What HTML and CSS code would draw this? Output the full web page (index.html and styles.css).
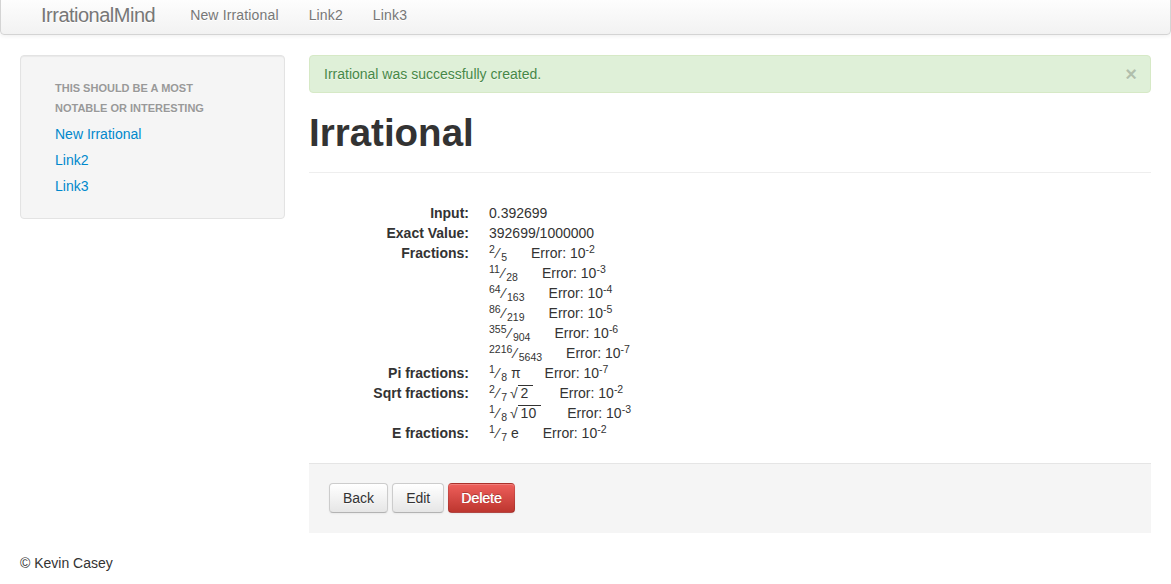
FILE: index.html
```html
<!DOCTYPE html>
<html>
<head>
<meta charset="utf-8">
<title>IrrationalMind</title>
<link rel="stylesheet" href="styles.css">
</head>
<body>
<div class="navbar">
  <a class="brand" href="#">IrrationalMind</a>
  <ul class="nav">
    <li><a href="#">New Irrational</a></li>
    <li><a href="#">Link2</a></li>
    <li><a href="#">Link3</a></li>
  </ul>
</div>

<div class="container">
  <div class="row">
    <aside class="well">
      <ul class="nav-list">
        <li class="nav-header">This should be a most<br>notable or interesting</li>
        <li><a href="#">New Irrational</a></li>
        <li><a href="#">Link2</a></li>
        <li><a href="#">Link3</a></li>
      </ul>
    </aside>

    <main class="content">
      <div class="alert">
        <span>Irrational was successfully created.</span>
        <span class="close">×</span>
      </div>

      <div class="page-header">
        <h1>Irrational</h1>
      </div>

      <dl class="dl">
        <dt>Input:</dt>
        <dd>0.392699</dd>
        <dt>Exact Value:</dt>
        <dd>392699/1000000</dd>
        <dt>Fractions:</dt>
        <dd>
          <div class="frac-row"><span class="frac"><sup>2</sup><span class="sl">⁄</span><sub>5</sub></span><span class="err">Error: 10<sup>-2</sup></span></div>
          <div class="frac-row"><span class="frac"><sup>11</sup><span class="sl">⁄</span><sub>28</sub></span><span class="err">Error: 10<sup>-3</sup></span></div>
          <div class="frac-row"><span class="frac"><sup>64</sup><span class="sl">⁄</span><sub>163</sub></span><span class="err">Error: 10<sup>-4</sup></span></div>
          <div class="frac-row"><span class="frac"><sup>86</sup><span class="sl">⁄</span><sub>219</sub></span><span class="err">Error: 10<sup>-5</sup></span></div>
          <div class="frac-row"><span class="frac"><sup>355</sup><span class="sl">⁄</span><sub>904</sub></span><span class="err">Error: 10<sup>-6</sup></span></div>
          <div class="frac-row"><span class="frac"><sup>2216</sup><span class="sl">⁄</span><sub>5643</sub></span><span class="err">Error: 10<sup>-7</sup></span></div>
        </dd>
        <dt>Pi fractions:</dt>
        <dd><span class="frac"><sup>1</sup><span class="sl">⁄</span><sub>8</sub></span> π<span class="err">Error: 10<sup>-7</sup></span></dd>
        <dt>Sqrt fractions:</dt>
        <dd>
          <div class="frac-row"><span class="frac"><sup>2</sup><span class="sl">⁄</span><sub>7</sub></span> <span class="root">√</span><span class="radicand">2</span><span class="err err-sq">Error: 10<sup>-2</sup></span></div>
          <div class="frac-row"><span class="frac"><sup>1</sup><span class="sl">⁄</span><sub>8</sub></span> <span class="root">√</span><span class="radicand">10</span><span class="err err-sq">Error: 10<sup>-3</sup></span></div>
        </dd>
        <dt>E fractions:</dt>
        <dd><span class="frac"><sup>1</sup><span class="sl">⁄</span><sub>7</sub></span> e<span class="err">Error: 10<sup>-2</sup></span></dd>
      </dl>

      <div class="form-actions">
        <a class="btn" href="#">Back</a>
        <a class="btn" href="#">Edit</a>
        <a class="btn btn-danger" href="#">Delete</a>
      </div>
    </main>
  </div>

  <footer class="footer">© Kevin Casey</footer>
</div>
</body>
</html>
```

FILE: styles.css
```css
* { box-sizing: border-box; }

html, body {
  margin: 0;
  padding: 0;
  background: #fff;
}

body {
  font-family: "Liberation Sans", Arial, Helvetica, sans-serif;
  font-size: 14px;
  line-height: 20px;
  color: #333;
}

a { text-decoration: none; }

ul { list-style: none; margin: 0; padding: 0; }

/* Navbar */
.navbar {
  display: flex;
  align-items: center;
  margin-top: -6px;
  height: 41px;
  padding: 0 20px;
  background: linear-gradient(to bottom, #ffffff, #f2f2f2);
  border: 1px solid #d4d4d4;
  border-radius: 4px;
  box-shadow: 0 1px 4px rgba(0,0,0,0.065);
  margin-bottom: 20px;
}

.brand {
  display: block;
  padding: 10px 20px 10px 20px;
  font-size: 20px;
  line-height: 20px;
  font-weight: 200;
  letter-spacing: -0.5px;
  color: #777;
  text-shadow: 0 1px 0 #fff;
}

.nav {
  display: flex;
}

.nav a {
  display: block;
  padding: 10px 15px;
  color: #777;
  line-height: 20px;
  letter-spacing: 0.15px;
  text-shadow: 0 1px 0 #fff;
}

/* Layout */
.container {
  padding: 0 20px;
}

.row {
  display: grid;
  grid-template-columns: 265px 1fr;
  column-gap: 24px;
  align-items: start;
}

/* Sidebar */
.well {
  background: #f5f5f5;
  border: 1px solid #e3e3e3;
  border-radius: 4px;
  box-shadow: inset 0 1px 1px rgba(0,0,0,0.05);
  padding: 20px 19px 19px;
  margin-bottom: 20px;
}

.nav-list {
  padding: 0 15px;
}

.nav-header {
  display: block;
  padding: 3px 0 3px;
  font-size: 11px;
  font-weight: bold;
  line-height: 19.5px;
  color: #999;
  text-transform: uppercase;
  text-shadow: 0 1px 0 rgba(255,255,255,0.5);
}

.nav-list a {
  display: block;
  padding: 3px 0;
  color: #0088cc;
  line-height: 20px;
}

/* Alert */
.alert {
  position: relative;
  display: flex;
  justify-content: space-between;
  align-items: center;
  padding: 8px 14px 8px 14px;
  margin-bottom: 20px;
  background: #dff0d8;
  border: 1px solid #d6e9c6;
  border-radius: 4px;
  color: #468847;
  text-shadow: 0 1px 0 rgba(255,255,255,0.5);
}

.close {
  font-size: 20px;
  font-weight: bold;
  line-height: 20px;
  color: #000;
  opacity: 0.2;
  margin-right: -1px;
  text-shadow: 0 1px 0 #fff;
}

/* Header */
.page-header {
  padding-bottom: 9px;
  margin: 20px 0 30px;
  border-bottom: 1px solid #eee;
}

h1 {
  margin: 0;
  padding: 0 0 10px;
  font-size: 38.5px;
  line-height: 40px;
  font-weight: bold;
  color: #333;
}

/* Definition list */
.dl {
  display: grid;
  grid-template-columns: 160px 1fr;
  column-gap: 20px;
  margin: 0 0 20px;
}

.dl dt {
  font-weight: bold;
  text-align: right;
  line-height: 20px;
}

.dl dd {
  margin: 0;
  line-height: 20px;
}

.frac-row {
  line-height: 20px;
}

sup, sub {
  position: relative;
  font-size: 75%;
  line-height: 0;
  vertical-align: baseline;
}

sup { top: -0.5em; }
sub { bottom: -0.25em; }

.sl {
  display: inline-block;
  margin: 0 2px;
}

.err { margin-left: 24px; }
.err.err-sq { margin-left: 26px; }

.root {
  margin-left: -1px;
}

.radicand {
  display: inline-block;
  line-height: 12px;
  padding: 1px 5px 0 3px;
  border-top: 1px solid #333;
}

/* Form actions */
.form-actions {
  display: flex;
  gap: 4px;
  padding: 19px 20px 20px;
  margin: 20px 0;
  background: #f5f5f5;
  border-top: 1px solid #e5e5e5;
}

.btn {
  display: inline-block;
  padding: 4px 13px;
  font-size: 14px;
  line-height: 20px;
  color: #333;
  text-align: center;
  text-shadow: 0 1px 1px rgba(255,255,255,0.75);
  background: linear-gradient(to bottom, #ffffff, #e6e6e6);
  border: 1px solid #cccccc;
  border-bottom-color: #b3b3b3;
  border-radius: 4px;
  box-shadow: inset 0 1px 0 rgba(255,255,255,0.2), 0 1px 2px rgba(0,0,0,0.05);
}

.btn-danger {
  padding: 4px 12px;
  color: #fff;
  text-shadow: 0 -1px 0 rgba(0,0,0,0.25), 0.3px 0 0 #fff;
  background: linear-gradient(to bottom, #ee5f5b, #bd362f);
  border-color: rgba(0,0,0,0.1) rgba(0,0,0,0.1) rgba(0,0,0,0.25);
}

/* Footer */
.footer {
  line-height: 20px;
}
```
